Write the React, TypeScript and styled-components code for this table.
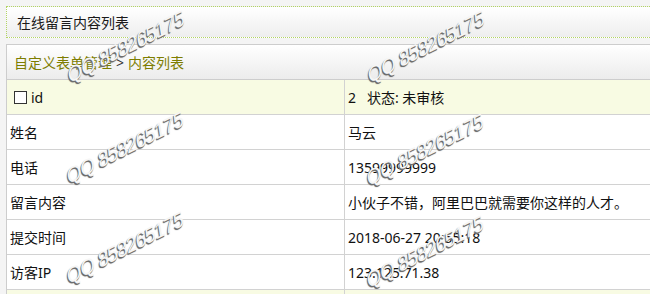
import React from "react";
import styled, { createGlobalStyle } from "styled-components";

const GlobalStyle = createGlobalStyle`
  html, body {
    margin: 0;
    padding: 0;
    overflow: hidden;
    background: #f4f4f4;
  }
`;

const Page = styled.div`
  position: relative;
  width: 100vw;
  height: 100vh;
  overflow: hidden;
  padding: 6px 0 0 6px;
  box-sizing: border-box;
  font-family: "Noto Sans", "Noto Sans CJK SC", sans-serif;
  font-size: 14px;
  color: #111;
`;

const TitleBar = styled.div`
  height: 30px;
  display: flex;
  align-items: center;
  padding-left: 10px;
  border: 1px dotted #b3d465;
  border-right: none;
  background: linear-gradient(#ffffff, #eeeeee);
  color: #1a1a1a;
`;

const Panel = styled.div`
  margin-top: 6px;
  border: 1px solid #cdcdcd;
  border-right: none;
  background: #fff;
`;

const Crumbs = styled.div`
  height: 34px;
  display: flex;
  align-items: center;
  padding-left: 7px;
  border-bottom: 1px solid #cdcdcd;
  background: linear-gradient(#ffffff, #ececec);
  color: #7d7d00;
`;

const Sep = styled.span`
  color: #333;
  margin: 0 4px;
`;

const Row = styled.div<{ $tone?: "head" | "plain" }>`
  display: grid;
  grid-template-columns: 338px 1fr;
  height: 34px;
  border-bottom: 1px solid #d2d2d2;
  background: ${(p) => (p.$tone === "head" ? "#f8fbe3" : "#ffffff")};
`;

const Cell = styled.div<{ $first?: boolean }>`
  display: flex;
  align-items: center;
  padding-left: 3px;
  border-right: ${(p) => (p.$first ? "1px solid #d2d2d2" : "none")};
  white-space: pre;
`;

const Check = styled.span`
  display: inline-block;
  width: 11px;
  height: 11px;
  border: 1px solid #333;
  background: #fff;
  margin: 0 4px 0 4px;
`;

const Watermark = styled.div`
  position: absolute;
  transform: translate(-50%, -50%) rotate(-27deg) skewX(-18deg);
  font-family: "Liberation Sans", Arial, sans-serif;
  font-size: 20px;
  font-weight: normal;
  color: #f6f6f6;
  text-shadow: -1px 1px 1px #6a6a6a, -1px 1px 0 #8a8a8a;
  white-space: nowrap;
  pointer-events: none;
  letter-spacing: -0.6px;
`;

const rows: [string, string][] = [
  ["姓名", "马云"],
  ["电话", "13599999999"],
  ["留言内容", "小伙子不错，阿里巴巴就需要你这样的人才。"],
  ["提交时间", "2018-06-27 20:55:18"],
  ["访客IP", "123.125.71.38"],
];

const marks = [
  { x: 126, y: 47 },
  { x: 426, y: 47 },
  { x: 125, y: 148 },
  { x: 425, y: 150 },
  { x: 125, y: 248 },
  { x: 425, y: 252 },
];

export default function App() {
  return (
    <>
      <GlobalStyle />
      <Page>
        <TitleBar>在线留言内容列表</TitleBar>
        <Panel>
          <Crumbs>
            自定义表单管理<Sep>&gt;</Sep>内容列表
          </Crumbs>
          <Row $tone="head">
            <Cell $first>
              <Check />
              id
            </Cell>
            <Cell>{"2   状态: 未审核"}</Cell>
          </Row>
          {rows.map(([k, v]) => (
            <Row key={k}>
              <Cell $first>{k}</Cell>
              <Cell>{v}</Cell>
            </Row>
          ))}
          <Row $tone="head">
            <Cell $first />
            <Cell />
          </Row>
        </Panel>
        {marks.map((m, i) => (
          <Watermark key={i} style={{ left: m.x, top: m.y }}>
            QQ 858265175
          </Watermark>
        ))}
      </Page>
    </>
  );
}
